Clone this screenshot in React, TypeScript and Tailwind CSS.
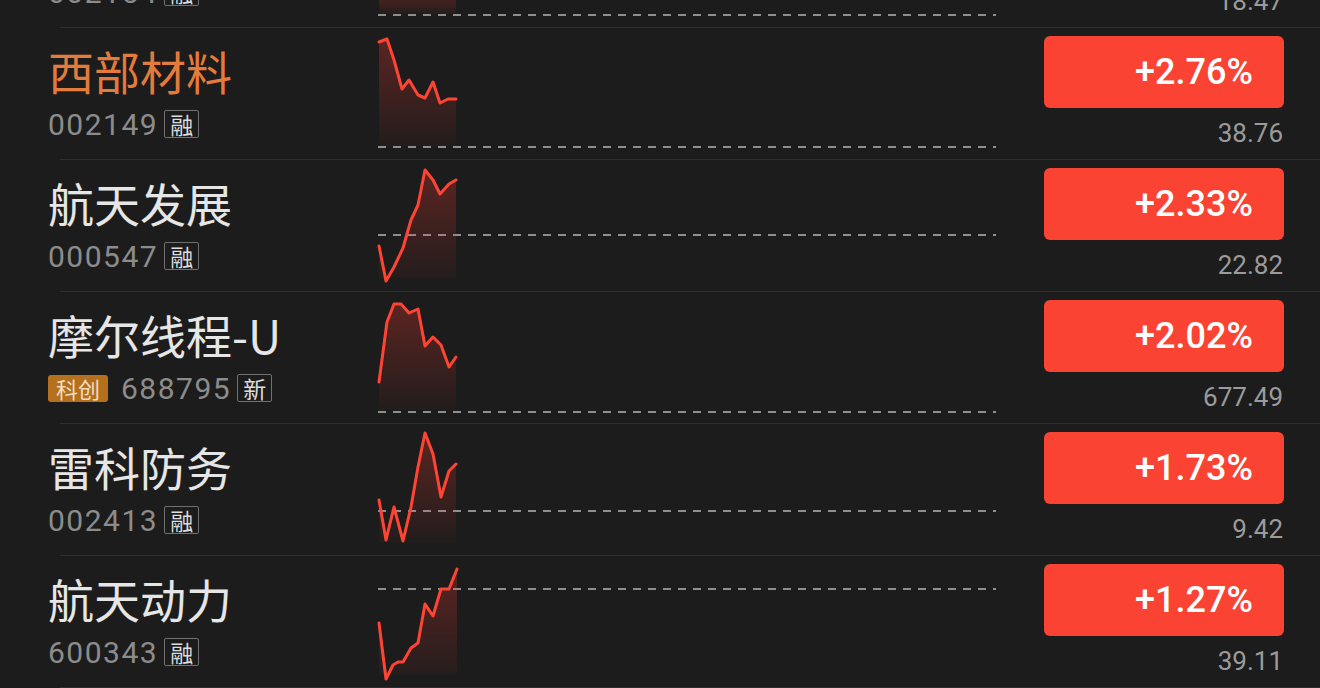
type Stock = {
  name: string;
  code: string;
  tags: string[];
  star?: boolean;
  change: string;
  price: string;
  highlight?: boolean;
  base: number;
  points: [number, number][];
};

const stocks: Stock[] = [
  {
    name: "",
    code: "002154",
    tags: ["融"],
    change: "+3.01%",
    price: "18.47",
    base: 119,
    points: [
      [0, 100], [8, 96], [15, 98], [23, 94], [30, 97], [39, 95], [46, 96], [54, 94], [61, 97], [69, 95], [77, 96],
    ],
  },
  {
    name: "西部材料",
    code: "002149",
    tags: ["融"],
    change: "+2.76%",
    price: "38.76",
    highlight: true,
    base: 119,
    points: [
      [0, 14], [8, 11], [15, 32], [23, 61], [30, 52], [39, 67], [46, 70], [54, 54], [61, 75], [69, 71], [77, 71],
    ],
  },
  {
    name: "航天发展",
    code: "000547",
    tags: ["融"],
    change: "+2.33%",
    price: "22.82",
    base: 75,
    points: [
      [0, 86], [7, 121], [15, 107], [24, 88], [32, 60], [39, 45], [46, 10], [54, 20], [61, 34], [70, 24], [77, 20],
    ],
  },
  {
    name: "摩尔线程-U",
    code: "688795",
    tags: ["新"],
    star: true,
    change: "+2.02%",
    price: "677.49",
    base: 120,
    points: [
      [0, 90], [8, 30], [15, 12], [22, 12], [30, 21], [39, 17], [46, 54], [54, 45], [62, 53], [70, 75], [77, 65],
    ],
  },
  {
    name: "雷科防务",
    code: "002413",
    tags: ["融"],
    change: "+1.73%",
    price: "9.42",
    base: 87,
    points: [
      [0, 76], [7, 116], [15, 83], [24, 117], [32, 83], [39, 43], [46, 9], [54, 30], [62, 73], [70, 47], [77, 40],
    ],
  },
  {
    name: "航天动力",
    code: "600343",
    tags: ["融"],
    change: "+1.27%",
    price: "39.11",
    base: 33,
    points: [
      [0, 67], [7, 123], [14, 109], [19, 106], [24, 106], [32, 92], [39, 87], [46, 48], [54, 60], [62, 33], [70, 33], [78, 13],
    ],
  },
];

function Spark({ points, base, id }: { points: [number, number][]; base: number; id: string }) {
  const line = points.map(([x, y]) => `${x + 1},${y}`).join(" ");
  const last = points[points.length - 1][0] + 1;
  const area = `1,118 ${line} ${last},118`;
  return (
    <svg width="618" height="131" viewBox="0 0 618 131" className="shrink-0 overflow-visible">
      <defs>
        <linearGradient id={id} x1="0" y1="0" x2="0" y2="1">
          <stop offset="0%" stopColor="#ff3b2f" stopOpacity="0.28" />
          <stop offset="100%" stopColor="#ff3b2f" stopOpacity="0.03" />
        </linearGradient>
      </defs>
      <line x1="0" y1={base} x2="618" y2={base} stroke="#8e8e8e" strokeWidth="1.8" strokeDasharray="8 7" />
      <polygon points={area} fill={`url(#${id})`} />
      <polyline points={line} fill="none" stroke="#ff4433" strokeWidth="3" strokeLinejoin="round" strokeLinecap="round" />
    </svg>
  );
}

function Row({ s, i }: { s: Stock; i: number }) {
  return (
    <div>
      <div className="flex h-[131px] pl-[48px] pr-[36px]">
        <div className="flex w-[330px] shrink-0 flex-col pt-[16px]">
          <div
            className={`h-[52px] whitespace-nowrap text-[46px] leading-[52px] ${s.highlight ? "text-[#e27b3b]" : "text-[#e6e6e6]"}`}
            style={{ fontFamily: '"Noto Sans CJK SC", "Noto Sans", sans-serif' }}
          >
            {s.name}
          </div>
          <div className="mt-[8px] flex h-[40px] items-center">
            {s.star && (
              <span
                className="mr-[13px] flex h-[27px] w-[60px] items-center justify-center rounded-[3px] bg-[#b5701d] text-[22px] text-[#f1dcc0]"
                style={{ fontFamily: '"Noto Sans CJK SC", sans-serif' }}
              >
                科创
              </span>
            )}
            <span className="text-[30px] tracking-[1.5px] text-[#8c8c8c]" style={{ fontFamily: 'Roboto, "Liberation Sans", sans-serif' }}>
              {s.code}
            </span>
            {s.tags.map((t) => (
              <span
                key={t}
                className="ml-[6px] flex h-[28px] w-[35px] items-center justify-center rounded-[2px] border-[1.5px] border-[#707070] text-[23px] leading-none text-[#dedede]"
                style={{ fontFamily: '"Noto Sans CJK SC", sans-serif' }}
              >
                {t}
              </span>
            ))}
          </div>
        </div>
        <Spark points={s.points} base={s.base} id={`g${i}`} />
        <div className="flex flex-1 flex-col items-end pt-[8px]" style={{ fontFamily: 'Roboto, "Liberation Sans", sans-serif' }}>
          <div className="flex h-[72px] w-[240px] items-center justify-end rounded-[6px] bg-[#fa4332] pr-[31px] text-[36px] font-medium text-white">
            {s.change}
          </div>
          <div className="mt-[8px] mr-[1px] text-[26px] leading-[34px] text-[#9b9b9b]">{s.price}</div>
        </div>
      </div>
      <div className="ml-[60px] h-px bg-[#2d2d2d]" />
    </div>
  );
}

export default function App() {
  return (
    <div className="h-[688px] w-[1320px] overflow-hidden bg-[#1c1c1c]">
      <div className="mt-[-104px]">
        {stocks.map((s, i) => (
          <Row key={s.code} s={s} i={i} />
        ))}
      </div>
    </div>
  );
}
